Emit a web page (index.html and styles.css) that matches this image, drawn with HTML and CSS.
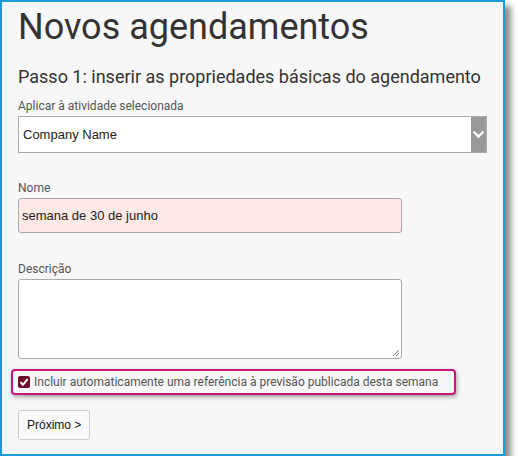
FILE: index.html
```html
<!DOCTYPE html>
<html lang="pt">
<head>
	<meta charset="UTF-8">
	<title>Novos agendamentos</title>
	<link rel="stylesheet" href="styles.css">
</head>
<body>
	<div class="panel">
		<h1 class="title">Novos agendamentos</h1>
		<h2 class="step">Passo 1: inserir as propriedades básicas do agendamento</h2>

		<label class="label">Aplicar à atividade selecionada</label>
		<div class="select">
			<span class="select-value">Company Name</span>
			<span class="select-arrow">
				<svg width="13" height="9" viewBox="0 0 13 9"><path d="M1.5 1.5 L6.5 6.5 L11.5 1.5" fill="none" stroke="#fff" stroke-width="2.4"/></svg>
			</span>
		</div>

		<label class="label label-nome">Nome</label>
		<div class="input input-error">semana de 30 de junho</div>

		<label class="label label-desc">Descrição</label>
		<div class="textarea">
			<svg class="grip" width="8" height="8" viewBox="0 0 8 8"><path d="M7 1 L1 7 M7 4 L4 7" stroke="#777" stroke-width="1"/></svg>
		</div>

		<div class="highlight">
			<span class="check">
				<svg width="12" height="12" viewBox="0 0 12 12"><path d="M2.5 6.3 L5 8.8 L9.6 3.2" fill="none" stroke="#fff" stroke-width="2"/></svg>
			</span>
			<span class="check-text">Incluir automaticamente uma referência à previsão publicada desta semana</span>
		</div>

		<div class="button">Próximo &gt;</div>
	</div>
</body>
</html>
```

FILE: styles.css
```css
* {
    margin: 0;
    padding: 0;
    box-sizing: border-box;
}
body {
    background: #fff;
    font-family: Roboto, "Liberation Sans", sans-serif;
    color: #333;
}
.panel {
    width: 505px;
    height: 456px;
    border: 2px solid #1a9bd8;
    background: #f7f7f7;
    box-shadow: 6px 6px 6px rgba(0, 0, 0, 0.45);
    padding: 0 16px;
    display: flex;
    flex-direction: column;
    align-items: flex-start;
}
.title {
    font-size: 36px;
    font-weight: 400;
    line-height: 41px;
    margin-top: 5px;
    color: #333;
}
.step {
    font-size: 18px;
    font-weight: 400;
    line-height: 22px;
    margin-top: 18px;
    color: #333;
}
.label {
    font-size: 12px;
    line-height: 14px;
    color: #555;
    margin-top: 11px;
}
.select {
    margin-top: 3px;
    width: 469px;
    height: 37px;
    border: 1px solid #aaa;
    background: #fff;
    display: flex;
    align-items: center;
}
.select-value {
    flex: 1;
    padding-left: 4px;
    font-family: "Liberation Sans", Arial, sans-serif;
    font-size: 13px;
    color: #222;
}
.select-arrow {
    width: 15px;
    height: 100%;
    background: #999;
    display: flex;
    align-items: center;
    justify-content: center;
}
.label-nome {
    margin-top: 28px;
}
.input {
    margin-top: 3px;
    width: 384px;
    height: 35px;
    border: 1px solid #aaa;
    border-radius: 3px;
    background: #fff;
    padding-left: 3px;
    font-family: "Liberation Sans", Arial, sans-serif;
    font-size: 13px;
    color: #222;
    display: flex;
    align-items: center;
}
.input-error {
    background: #fde8e6;
}
.label-desc {
    margin-top: 29px;
}
.textarea {
    margin-top: 3px;
    width: 384px;
    height: 80px;
    border: 1px solid #aaa;
    border-radius: 3px;
    background: #fff;
    display: flex;
    align-items: flex-end;
    justify-content: flex-end;
    padding: 0 1px 1px 0;
}
.highlight {
    margin: 10px 0 0 -7px;
    width: 445px;
    height: 26px;
    border: 2px solid #c4187f;
    border-radius: 4px;
    box-shadow: 1px 2px 4px rgba(0, 0, 0, 0.35);
    display: flex;
    align-items: center;
    padding-left: 5px;
    gap: 4px;
}
.check {
    width: 12px;
    height: 12px;
    background: #6d0e28;
    border-radius: 2px;
    display: flex;
}
.check-text {
    font-size: 12px;
    color: #555;
    white-space: nowrap;
}
.button {
    margin-top: 15px;
    height: 30px;
    padding: 0 8px;
    border: 1px solid #ccc;
    border-radius: 3px;
    background: #fafafa;
    font-family: "Liberation Sans", Arial, sans-serif;
    font-size: 12px;
    color: #111;
    display: flex;
    align-items: center;
}
```
